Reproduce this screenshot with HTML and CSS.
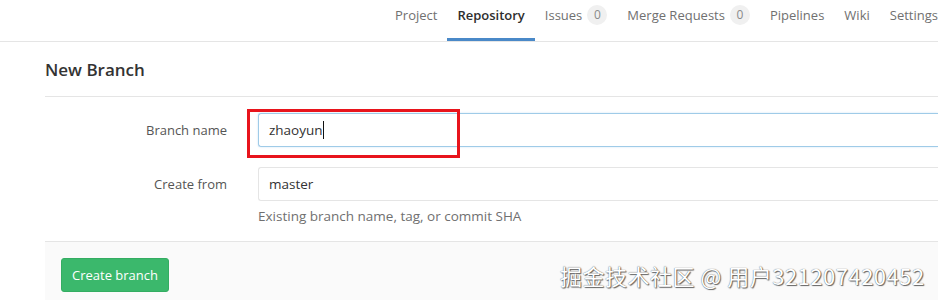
FILE: index.html
```html
<!DOCTYPE html>
<html lang="en">
<head>
  <meta charset="UTF-8">
  <title>New Branch</title>
  <link rel="stylesheet" href="styles.css">
</head>
<body>

  <nav class="nav-links">
    <a href="#">Project</a>
    <a href="#" class="active">Repository</a>
    <a href="#">Issues <span class="badge">0</span></a>
    <a href="#">Merge Requests <span class="badge">0</span></a>
    <a href="#">Pipelines</a>
    <a href="#">Wiki</a>
    <a href="#">Settings</a>
  </nav>

  <div class="content">
    <h3 class="page-title">New Branch</h3>

    <form class="branch-form">
      <div class="form-group">
        <label class="control-label">Branch name</label>
        <div class="form-control focused">zhaoyun<span class="caret"></span></div>
      </div>

      <div class="form-group">
        <label class="control-label">Create from</label>
        <div class="field">
          <div class="form-control">master</div>
          <div class="help-block">Existing branch name, tag, or commit SHA</div>
        </div>
      </div>

      <div class="form-actions">
        <button type="button" class="btn-create">Create branch</button>
      </div>
    </form>
  </div>

  <!-- screenshot annotation + watermark -->
  <div class="highlight-box"></div>
  <div class="watermark">掘金技术社区 @ 用户321207420452</div>

</body>
</html>
```

FILE: styles.css
```css
:root {
  --border: #e5e5e5;
  --text: #2e2e2e;
  --muted: #707070;
  --label: #555555;
  --focus: #9fcbe8;
  --green: #3bb86c;
  --blue: #4a89c8;
}

* {
  box-sizing: border-box;
  margin: 0;
  padding: 0;
}

body {
  font-family: "Open Sans", "Noto Sans", sans-serif;
  background: #ffffff;
  color: var(--text);
  width: 938px;
  height: 300px;
  overflow: hidden;
  position: relative;
}

.nav-links {
  display: flex;
  height: 42px;
  padding-left: 385px;
  border-bottom: 1px solid var(--border);
  white-space: nowrap;
  overflow: hidden;
}

.nav-links a {
  display: flex;
  align-items: center;
  padding: 0 10px 8px;
  color: var(--muted);
  text-decoration: none;
  font-size: 13px;
  border-bottom: 3px solid transparent;
}

.nav-links a.active {
  color: var(--text);
  font-weight: 600;
  border-bottom-color: var(--blue);
}

.badge {
  display: inline-block;
  margin-left: 5px;
  min-width: 20px;
  height: 20px;
  line-height: 20px;
  border-radius: 10px;
  background: #f0f0f0;
  color: #8a8a8a;
  font-size: 12px;
  text-align: center;
}

.content {
  margin-left: 45px;
}

.page-title {
  display: flex;
  align-items: center;
  height: 55px;
  font-size: 17px;
  font-weight: 600;
  color: #333;
  border-bottom: 1px solid var(--border);
}

.branch-form {
  padding-top: 16px;
}

.form-group {
  display: flex;
  align-items: flex-start;
  margin-bottom: 20px;
}

.control-label {
  width: 182px;
  margin-right: 31px;
  height: 34px;
  line-height: 34px;
  text-align: right;
  font-size: 13px;
  color: var(--label);
}

.field {
  flex: 1;
}

.form-control {
  flex: 1;
  height: 34px;
  line-height: 32px;
  padding-left: 10px;
  border: 1px solid var(--border);
  border-right: none;
  border-radius: 3px 0 0 3px;
  font-size: 13.5px;
  color: #333;
}

.form-control.focused {
  border-color: var(--focus);
  box-shadow: 0 0 2px rgba(120, 180, 230, 0.4);
}

.caret {
  display: inline-block;
  width: 1px;
  height: 18px;
  background: #111;
  vertical-align: middle;
  margin-top: -3px;
}

.help-block {
  margin-top: 5px;
  line-height: 20px;
  font-size: 13.5px;
  color: var(--muted);
}

.form-group:nth-child(2) {
  margin-bottom: 15px;
}

.form-actions {
  height: 59px;
  padding: 16px 0 0 16px;
  background: #fafafa;
  border-top: 1px solid var(--border);
}

.btn-create {
  height: 34px;
  padding: 0 10px;
  font-family: inherit;
  font-size: 13px;
  color: #ffffff;
  background: var(--green);
  border: 1px solid #34ad62;
  border-radius: 3px;
}

.highlight-box {
  position: absolute;
  left: 247px;
  top: 109px;
  width: 213px;
  height: 49px;
  border: 3px solid #e8141c;
}

.watermark {
  position: absolute;
  left: 560px;
  top: 259px;
  font-family: "Noto Sans CJK SC", sans-serif;
  font-size: 22px;
  letter-spacing: 0.5px;
  color: #ffffff;
  text-shadow: 0 0 1px #444, 1px 1px 1px #666;
}
```
